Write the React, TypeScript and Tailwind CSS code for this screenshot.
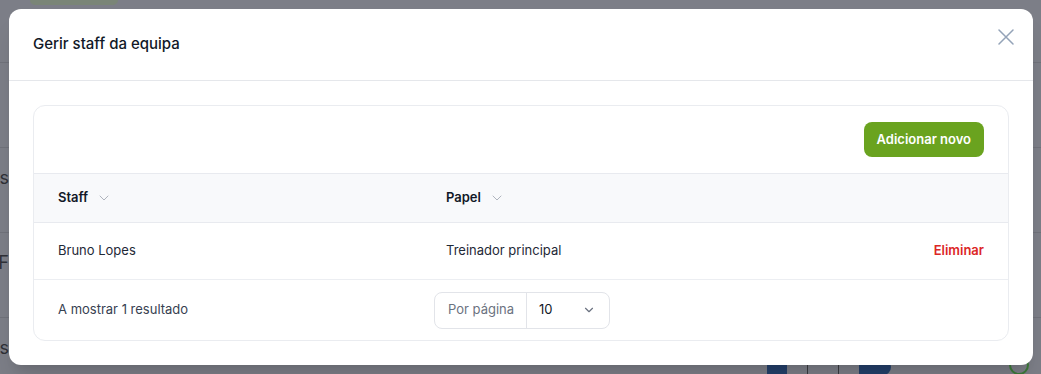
import { ChevronDown } from 'lucide-react';

const font = { fontFamily: 'Inter, "Noto Sans", sans-serif' };

function CloseIcon() {
  return (
    <svg width="16" height="16" viewBox="0 0 16 16" fill="none" stroke="#94a3b8" strokeWidth="1.5" strokeLinecap="round">
      <path d="M1 1L15 15M15 1L1 15" />
    </svg>
  );
}

function BackdropPage() {
  const rows = ['', 's', 'F', 's'];
  return (
    <div className="flex flex-col">
      <div className="h-[62px] pl-[30px]">
        <div className="h-[5px] w-[88px] rounded-b-lg bg-[#7a8577]" />
      </div>
      {rows.map((t, i) => (
        <div key={i} className="flex h-[85px] border-t border-[#70727a]">
          <div className="flex w-[9px] justify-end overflow-hidden pt-[16px] text-lg text-[#2f3036]">{t}</div>
        </div>
      ))}
      <div className="-mt-[47px] flex items-start gap-5 pl-[767px]">
        <div className="h-[20px] w-[20px] bg-[#24406a]" />
        <div className="mt-[6px] h-[14px] w-[32px] border border-[#3a3b40]" />
        <div className="mt-[4px] h-[16px] w-[32px] rounded-r-full bg-[#24406a]" />
        <div className="ml-[98px] h-[20px] w-[20px] rounded-full border-2 border-[#3d7a3a]" />
      </div>
    </div>
  );
}

export default function App() {
  return (
    <div className="relative h-[374px] w-full overflow-hidden bg-[#7c7e87]" style={font}>
      <BackdropPage />

      <div className="absolute left-[9px] top-[9px] w-[1024px] rounded-xl bg-white shadow-xl">
        <div className="flex h-[72px] items-center justify-between border-b border-[#e5e7eb] pl-6 pr-[17px]">
          <h2 className="text-[15px] font-medium text-[#111827]">Gerir staff da equipa</h2>
          <button className="-mt-4 p-0.5"><CloseIcon /></button>
        </div>

        <div className="p-6">
          <div className="overflow-hidden rounded-xl border border-[#eaecf0]">
            <div className="flex justify-end px-6 py-4">
              <button className="h-[35px] rounded-lg bg-[#6aa31f] px-[13px] text-[13px] font-semibold text-white">Adicionar novo</button>
            </div>

            <table className="w-full text-left text-[13px]">
              <thead className="border-y border-[#e8eaef] bg-[#f8f9fb]">
                <tr className="h-[49px]">
                  <th className="w-[388px] pl-6 font-semibold text-[#111827]">
                    <span className="inline-flex items-center gap-2">Staff <ChevronDown size={16} strokeWidth={1.25} className="text-[#a0a6b1]" /></span>
                  </th>
                  <th className="pl-6 font-semibold text-[#111827]">
                    <span className="inline-flex items-center gap-2">Papel <ChevronDown size={16} strokeWidth={1.25} className="text-[#a0a6b1]" /></span>
                  </th>
                  <th />
                </tr>
              </thead>
              <tbody>
                <tr className="h-[57px] border-b border-[#eceef2]">
                  <td className="pl-6 text-[#1f2937]">Bruno Lopes</td>
                  <td className="pl-6 text-[#1f2937]">Treinador principal</td>
                  <td className="pr-6 text-right font-semibold text-[#dc2626]">Eliminar</td>
                </tr>
              </tbody>
            </table>

            <div className="flex h-[60px] items-center pl-6">
              <span className="w-[376px] text-[13px] text-[#374151]">A mostrar 1 resultado</span>
              <div className="flex h-[37px] w-[176px] items-center rounded-lg border border-[#e2e4e9] text-[13px]">
                <span className="flex h-full w-[92px] items-center border-r border-[#e2e4e9] pl-[13px] text-[#6b7280]">Por página</span>
                <span className="flex flex-1 items-center justify-between pl-3 pr-[13px] text-[#111827]">
                  10
                  <ChevronDown size={14} strokeWidth={2} className="text-[#6b7280]" />
                </span>
              </div>
            </div>
          </div>
        </div>
      </div>
    </div>
  );
}
